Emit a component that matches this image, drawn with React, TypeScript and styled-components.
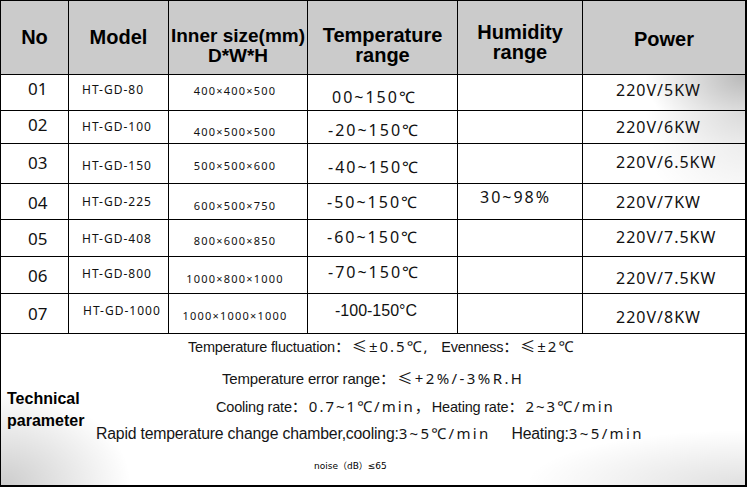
import React from 'react';
import styled, { createGlobalStyle } from 'styled-components';

const Global = createGlobalStyle`
  html, body { margin: 0; padding: 0; background: #fff; }
  body { width: 747px; height: 488px; overflow: hidden; }
`;

const Table = styled.div`
  display: grid;
  grid-template-columns: 67px 99px 138px 149px 124px 162px;
  grid-template-rows: 73px 35px 32px 39px 35px 36px 36px 39px 151px;
  gap: 1px;
  width: max-content;
  background: #000;
  border-left: 1px solid #000;
  border-top: 1px solid #000;
  border-right: 2px solid #000;
  border-bottom: 2px solid #000;
  color: #111;
`;

const HeadCell = styled.div<{ $top: number; $lh: number; $size?: number }>`
  background: #cbcbcb;
  font-family: "Liberation Sans", Arial, sans-serif;
  font-weight: 700;
  font-size: ${(p) => p.$size ?? 20}px;
  line-height: ${(p) => p.$lh}px;
  text-align: center;
  white-space: nowrap;
  padding-top: ${(p) => p.$top}px;
  color: #000;
`;

const Cell = styled.div<{ $top: number; $left?: number }>`
  background: #fff;
  padding-top: ${(p) => p.$top}px;
  padding-left: ${(p) => p.$left ?? 0}px;
  line-height: 1;
  white-space: nowrap;
  font-family: "Noto Sans", "Noto Sans CJK SC", sans-serif;
`;

const NoCell = styled(Cell)`
  font-size: 17px;
`;

const ModelCell = styled(Cell)`
  font-size: 12px;
  letter-spacing: 1px;
`;

const SizeCell = styled(Cell)`
  font-size: 11px;
  letter-spacing: 1.2px;
  text-align: center;
  padding-right: 6px;
`;

const TempCell = styled(Cell)<{ $plain?: boolean }>`
  font-size: 16px;
  letter-spacing: ${(p) => (p.$plain ? '0' : '2px')};
  font-family: ${(p) =>
    p.$plain ? '"Liberation Sans", Arial, sans-serif' : '"Noto Sans", "Noto Sans CJK SC", sans-serif'};
`;

const HumCell = styled(Cell)`
  font-size: 16px;
  letter-spacing: 2px;
`;

const PowerCell = styled(Cell)<{ $shade: number }>`
  font-size: 16px;
  letter-spacing: 1px;
  background: ${(p) =>
    p.$shade > 0
      ? `radial-gradient(100px 70px at 100% 0%, rgba(0,0,0,${p.$shade}), rgba(0,0,0,0) 100%), #fff`
      : '#fff'};
`;

const Tech = styled.div`
  grid-column: 1 / -1;
  display: grid;
  grid-template-columns: 90px 1fr;
  background:
    radial-gradient(130px 95px at 0% 100%, rgba(0,0,0,0.2), rgba(0,0,0,0) 100%),
    radial-gradient(220px 55px at 100% 100%, rgba(0,0,0,0.12), rgba(0,0,0,0) 100%),
    #fff;
`;

const Label = styled.div`
  padding: 54px 0 0 6px;
  font-family: "Liberation Sans", Arial, sans-serif;
  font-weight: 700;
  font-size: 16px;
  line-height: 22px;
  color: #000;
`;

const Lines = styled.div`
  display: flex;
  flex-direction: column;
  padding-top: 2px;
`;

const Line = styled.div<{ $left: number; $h: number; $size?: number }>`
  height: ${(p) => p.$h}px;
  padding-left: ${(p) => p.$left}px;
  white-space: pre;
  line-height: 20px;
  font-family: "Liberation Sans", Arial, sans-serif;
  font-size: ${(p) => p.$size ?? 14.5}px;
  letter-spacing: -0.2px;
  color: #151515;
`;

const NoiseLine = styled(Line)`
  font-family: "DejaVu Sans", "Noto Sans CJK SC", sans-serif;
  font-size: 9px;
  letter-spacing: 0;
  color: #000;
`;

const Num = styled.span<{ $ls?: number }>`
  font-family: "Noto Sans", "Noto Sans CJK SC", sans-serif;
  font-size: 15px;
  letter-spacing: ${(p) => p.$ls ?? 2}px;
`;

type Row = {
  no: string;
  model: string;
  size: string;
  temp: string;
  hum: string;
  power: string;
  pNo: number;
  pModel: number;
  lModel: number;
  pSize: number;
  pTemp: number;
  lTemp: number;
  pPower: number;
  shade: number;
  plain?: boolean;
};

const rows: Row[] = [
  { no: '01', model: 'HT-GD-80', size: '400×400×500', temp: '00~150℃', hum: '', power: '220V/5KW', pNo: 5, pModel: 9, lModel: 13, pSize: 10, pTemp: 14, lTemp: 24, pPower: 7, shade: 0.28 },
  { no: '02', model: 'HT-GD-100', size: '400×500×500', temp: '-20~150℃', hum: '', power: '220V/6KW', pNo: 5, pModel: 10, lModel: 13, pSize: 15, pTemp: 11, lTemp: 20, pPower: 8, shade: 0.15 },
  { no: '03', model: 'HT-GD-150', size: '500×500×600', temp: '-40~150℃', hum: '', power: '220V/6.5KW', pNo: 10, pModel: 16, lModel: 13, pSize: 16, pTemp: 15, lTemp: 20, pPower: 10, shade: 0.07 },
  { no: '04', model: 'HT-GD-225', size: '600×500×750', temp: '-50~150℃', hum: '30~98%', power: '220V/7KW', pNo: 10, pModel: 12, lModel: 13, pSize: 16, pTemp: 10, lTemp: 19, pPower: 10, shade: 0 },
  { no: '05', model: 'HT-GD-408', size: '800×600×850', temp: '-60~150℃', hum: '', power: '220V/7.5KW', pNo: 10, pModel: 13, lModel: 13, pSize: 15, pTemp: 9, lTemp: 19, pPower: 9, shade: 0 },
  { no: '06', model: 'HT-GD-800', size: '1000×800×1000', temp: '-70~150℃', hum: '', power: '220V/7.5KW', pNo: 10, pModel: 11, lModel: 13, pSize: 16, pTemp: 7, lTemp: 20, pPower: 13, shade: 0 },
  { no: '07', model: 'HT-GD-1000', size: '1000×1000×1000', temp: '-100-150°C', hum: '', power: '220V/8KW', pNo: 11, pModel: 11, lModel: 14, pSize: 16, pTemp: 9, lTemp: 27, pPower: 15, shade: 0, plain: true },
];

export default function App() {
  return (
    <>
      <Global />
      <Table>
        <HeadCell $top={26} $lh={20}>No</HeadCell>
        <HeadCell $top={26} $lh={20}>Model</HeadCell>
        <HeadCell $top={25} $lh={20} $size={19}>
          Inner size(mm)
          <br />
          D*W*H
        </HeadCell>
        <HeadCell $top={24} $lh={20}>
          Temperature
          <br />
          range
        </HeadCell>
        <HeadCell $top={21} $lh={20}>
          Humidity
          <br />
          range
        </HeadCell>
        <HeadCell $top={28} $lh={20}>Power</HeadCell>

        {rows.map((r) => (
          <React.Fragment key={r.no}>
            <NoCell $top={r.pNo} $left={27}>{r.no}</NoCell>
            <ModelCell $top={r.pModel} $left={r.lModel}>{r.model}</ModelCell>
            <SizeCell $top={r.pSize}>{r.size}</SizeCell>
            <TempCell $top={r.pTemp} $left={r.lTemp} $plain={r.plain}>{r.temp}</TempCell>
            <HumCell $top={5} $left={22}>{r.hum}</HumCell>
            <PowerCell $top={r.pPower} $left={33} $shade={r.shade}>{r.power}</PowerCell>
          </React.Fragment>
        ))}

        <Tech>
          <Label>
            Technical
            <br />
            parameter
          </Label>
          <Lines>
            <Line $left={97} $h={32}>
              Temperature fluctuation<Num>：≤±0.5℃,</Num>{'   '}Evenness<Num>：≤±2℃</Num>
            </Line>
            <Line $left={131} $h={28} $size={15}>
              Temperature error range<Num $ls={2.4}>：≤+2%/-3%R.H</Num>
            </Line>
            <Line $left={125} $h={27}>
              Cooling rate<Num>：0.7~1℃/min，</Num>Heating rate<Num>：2~3℃/min</Num>
            </Line>
            <Line $left={5} $h={33} $size={15.8}>
              Rapid temperature change chamber,cooling:<Num $ls={2.3}>3~5℃/min</Num>{'     '}Heating:<Num $ls={2.4}>3~5/min</Num>
            </Line>
            <NoiseLine $left={223} $h={20}>
              noise（dB）≤65
            </NoiseLine>
          </Lines>
        </Tech>
      </Table>
    </>
  );
}
